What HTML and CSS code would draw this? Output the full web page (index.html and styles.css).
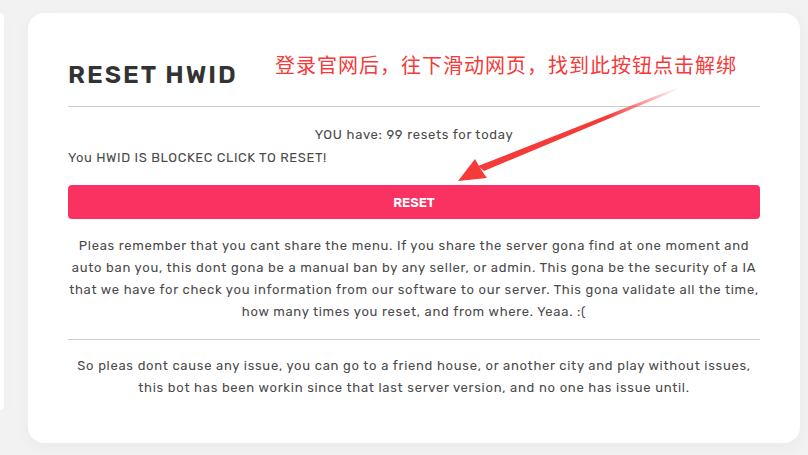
FILE: index.html
```html
<!DOCTYPE html>
<html lang="en">
<head>
    <meta charset="UTF-8">
    <meta name="viewport" content="width=device-width, initial-scale=1.0">
    <title>Reset HWID</title>
    <link rel="stylesheet" href="styles.css">
</head>
<body>
    <div class="layout">
        <aside class="side-card"></aside>
        <main class="card">
            <h1 class="title">RESET HWID</h1>
            <hr class="divider">
            <p class="resets">YOU have: 99 resets for today</p>
            <p class="status">You HWID IS BLOCKEC CLICK TO RESET!</p>
            <button type="button" class="reset-btn">RESET</button>
            <p class="info">Pleas remember that you cant share the menu. If you share the server gona find at one moment and auto ban you, this dont gona be a manual ban by any seller, or admin. This gona be the security of a IA that we have for check you information from our software to our server. This gona validate all the time, how many times you reset, and from where. Yeaa. :(</p>
            <hr class="divider">
            <p class="info">So pleas dont cause any issue, you can go to a friend house, or another city and play without issues, this bot has been workin since that last server version, and no one has issue until.</p>

            <div class="note">登录官网后，往下滑动网页，找到此按钮点击解绑</div>
            <svg class="arrow" width="270" height="120" viewBox="0 0 270 120">
                <defs>
                    <linearGradient id="fade" x1="256" y1="15" x2="60" y2="95" gradientUnits="userSpaceOnUse">
                        <stop offset="0" stop-color="#f53a3a" stop-opacity="0.05"/>
                        <stop offset="0.35" stop-color="#f53a3a" stop-opacity="1"/>
                    </linearGradient>
                </defs>
                <polygon fill="url(#fade)" points="256,14 257,16 64,97 58,92"/>
                <polygon fill="#f53a3a" points="38,107 55,85 59,92 62,97 67,104"/>
            </svg>
        </main>
    </div>
</body>
</html>
```

FILE: styles.css
```css
body {
    margin: 0;
    background-color: #f2f2f2;
    font-family: Rubik, Inter, "Noto Sans", sans-serif;
    color: #4a4a4a;
}
.layout {
    display: flex;
    gap: 24px;
    height: 455px;
    overflow: hidden;
}
.side-card {
    width: 4px;
    flex: none;
    margin-top: 13px;
    height: 397px;
    background-color: #ffffff;
    border-radius: 0 14px 14px 0;
    box-shadow: 0 4px 18px rgba(0, 0, 0, 0.04);
}
.card {
    position: relative;
    width: 772px;
    flex: none;
    margin-top: 13px;
    height: 430px;
    box-sizing: border-box;
    padding: 46px 40px 0 40px;
    background-color: #ffffff;
    border-radius: 16px;
    box-shadow: 0 4px 18px rgba(0, 0, 0, 0.04);
}
.title {
    margin: 0;
    font-size: 25px;
    font-weight: 600;
    letter-spacing: 2px;
    color: #333333;
    line-height: 32px;
}
.divider {
    border: none;
    border-top: 1px solid #cccccc;
    margin: 15px 0 0 0;
}
.resets {
    margin: 17px 0 0 0;
    text-align: center;
    font-size: 13px;
    letter-spacing: 0.7px;
    line-height: 22px;
}
.status {
    margin: 1px 0 0 0;
    font-size: 13px;
    letter-spacing: 0.6px;
    line-height: 22px;
}
.reset-btn {
    display: block;
    width: 100%;
    height: 34px;
    margin-top: 16px;
    border: none;
    border-radius: 4px;
    background-color: #f93262;
    color: #ffffff;
    font-family: inherit;
    font-size: 13px;
    font-weight: 600;
}
.info {
    margin: 16px 0 0 0;
    text-align: center;
    font-size: 13px;
    letter-spacing: 0.72px;
    line-height: 22px;
}
.card .divider + .info {
    margin-top: 15px;
}
.card .info + .divider {
    margin-top: 16px;
}
.note {
    position: absolute;
    left: 247px;
    top: 37px;
    font-family: "Noto Sans CJK SC", sans-serif;
    font-size: 20px;
    color: #f53a3a;
    letter-spacing: 1px;
}
.arrow {
    position: absolute;
    left: 392px;
    top: 61px;
}
```
